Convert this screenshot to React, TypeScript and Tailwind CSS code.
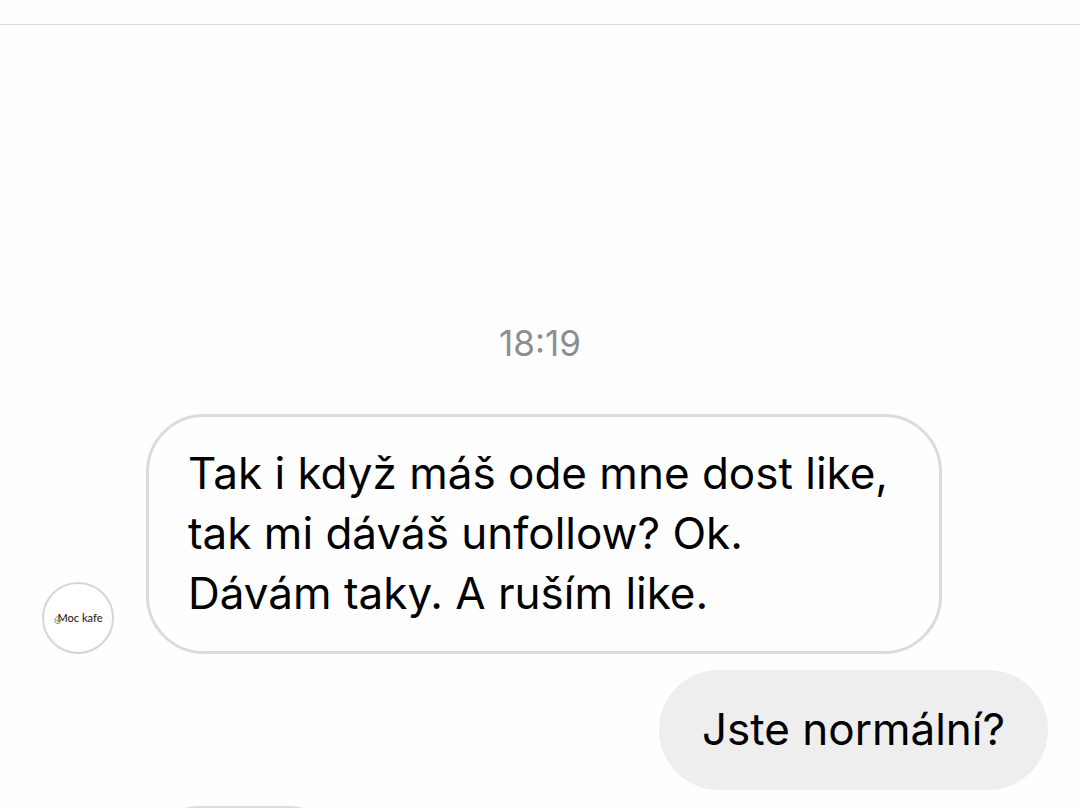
import type { ReactNode } from "react";

const Incoming = ({ children }: { children: ReactNode }) => (
  <div className="max-w-[796px] rounded-[58px] border-[3px] border-[#dbdbdb] pt-[26px] pb-7 px-[39px]">
    {children}
  </div>
);

const Avatar = () => (
  <div className="flex h-18 w-18 shrink-0 items-center justify-center rounded-full border-2 border-[#d6d6d6] bg-white">
    <svg viewBox="0 0 8 10" className="-mr-1 mt-1 h-[10px] w-2" fill="none" strokeLinecap="round">
      <path stroke="#6f9a5c" d="M4 1.500C1.500 2 .5 4.500 1 6.500 1.600 8.800 4.500 9.300 6 7.500 7 6.300 6.800 5 6 4.200" />
      <path stroke="#8fb57c" strokeWidth=".8" d="M1.500 4.500 3 5.500 4.500 4.500M3 5.500 3.500 7.500" />
    </svg>
    <span className="font-[Lato] text-[11px] font-medium text-[#2e2620]">Moc kafe</span>
  </div>
);

export default function App() {
  return (
    <div className="h-screen overflow-hidden bg-[#fefefe] font-[Inter,'Liberation_Sans',sans-serif] text-black">
      <header className="h-[25px] border-b border-[#dbdbdb]"></header>
      <main className="flex flex-col">
        <time className="mt-[298px] text-center text-[35px] leading-10 text-[#8e8e8e]">
          18:19
        </time>
        <div className="mt-[51px] flex items-end gap-8 pl-[42px]">
          <Avatar />
          <Incoming>
            <p className="text-[44px] leading-[60px]">
              Tak i když máš ode mne dost like, tak mi dáváš unfollow? Ok.
              <br />
              Dávám taky. A ruším like.
            </p>
          </Incoming>
        </div>
        <div className="mr-8 mt-4 self-end rounded-[60px] bg-[#eeeeee] px-[43px] pt-[29px] pb-[31px]">
          <p className="text-[44px] leading-[60px]">Jste normální?</p>
        </div>
        <div className="ml-[146px] mt-4 h-30 w-[196px] rounded-[54px] border-[3px] border-[#dbdbdb]"></div>
      </main>
    </div>
  );
}
